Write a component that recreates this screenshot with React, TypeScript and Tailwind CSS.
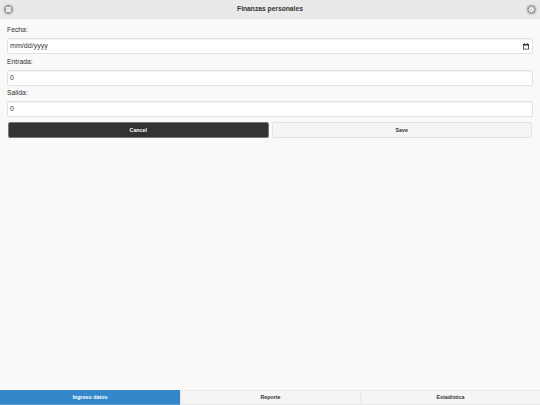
import type { ReactNode } from 'react';

function RoundButton({ label, children }: { label: string; children: ReactNode }) {
  return (
    <button
      aria-label={label}
      className="flex size-[11px] items-center justify-center rounded-full border border-[#d6d6d6] bg-[#f4f4f4] shadow-[0_0_1px_rgba(0,0,0,0.15)]"
    >
      {children}
    </button>
  );
}

function BarsIcon() {
  return (
    <svg viewBox="0 0 18 18" className="size-[9px] shrink-0">
      <circle cx="9" cy="9" r="9" fill="#9c9c9c" />
      <path d="M4 5.5h10M4 9h10M4 12.5h10" stroke="#f2f2f2" strokeWidth="2.6" />
    </svg>
  );
}

function GearIcon() {
  return (
    <svg viewBox="0 0 18 18" className="size-[9px] shrink-0">
      <circle cx="9" cy="9" r="9" fill="#a3a3a3" />
      <circle cx="9" cy="9" r="3" fill="none" stroke="#fff" strokeWidth="2.6" />
      <path
        d="M9 3.5v2M9 12.5v2M3.5 9h2M12.5 9h2M5.1 5.1l1.4 1.4M11.5 11.5l1.4 1.4M12.9 5.1l-1.4 1.4M6.5 11.5l-1.4 1.4"
        stroke="#fff"
        strokeWidth="1.8"
      />
    </svg>
  );
}

function CalendarIcon() {
  return (
    <svg viewBox="0 0 6 7" className="h-[7px] w-[6px]">
      <path d="M0 1h1V0.3h1V1h2V0.3h1V1h1v5.5H0z M0.8 2.6v3.1h4.4V2.6z" fill="#333" fillRule="evenodd" />
    </svg>
  );
}

function Field({ label, value, date = false }: { label: string; value: string; date?: boolean }) {
  return (
    <div>
      <div className="h-[13px] pt-px text-[6.8px] leading-[8px]">{label}</div>
      <div
        className={`flex items-center justify-between rounded-[2px] border border-[#e2e2e2] bg-white pr-[3px] pl-[2px] leading-[8px] shadow-[inset_0_1px_1px_rgba(0,0,0,0.05)] ${
          date ? 'mb-px h-[16px] text-[7.1px]' : 'h-[16px] text-[6.8px]'
        }`}
      >
        <span>{value}</span>
        {date && <CalendarIcon />}
      </div>
    </div>
  );
}

const tabs = ['Ingreso datos', 'Reporte', 'Estadística'];

export default function App() {
  return (
    <div className="flex h-[405px] w-[540px] flex-col overflow-hidden bg-[#f9f9f9] font-['Liberation_Sans',Arial,sans-serif] text-[#333]">
      <header className="flex h-[19px] shrink-0 items-center justify-between border-b border-[#e1e1e1] bg-[#e9e9e9] px-[3px]">
        <RoundButton label="Menú">
          <BarsIcon />
        </RoundButton>
        <h1 className="text-[6.7px] leading-[8px] font-bold">Finanzas personales</h1>
        <RoundButton label="Opciones">
          <GearIcon />
        </RoundButton>
      </header>

      <main className="flex-1 px-[7px] pt-[6px]">
        <div className="flex flex-col gap-[2px]">
          <Field label="Fecha:" value="mm/dd/yyyy" date />
          <Field label="Entrada:" value="0" />
          <Field label="Salida:" value="0" />
        </div>
        <div className="mt-[5px] grid grid-cols-2 gap-[3px] px-px text-[5.3px] leading-[6px] font-bold">
          <button className="h-[16px] rounded-[2px] border border-[#777] bg-[#333] text-white">Cancel</button>
          <button className="h-[16px] rounded-[2px] border border-[#e2e2e2] bg-[#f5f5f5]">Save</button>
        </div>
      </main>

      <footer className="grid h-[15px] shrink-0 grid-cols-3 text-[5.3px] leading-[6px] font-bold">
        {tabs.map((tab, i) => (
          <button
            key={tab}
            className={
              i === 0
                ? 'border-y border-[#5a9fd4] border-t-[#3388cc] bg-[#3388cc] pb-px text-white'
                : 'border-y border-l border-[#e9e9e9] bg-[#f5f5f5] pb-px'
            }
          >
            {tab}
          </button>
        ))}
      </footer>
    </div>
  );
}
